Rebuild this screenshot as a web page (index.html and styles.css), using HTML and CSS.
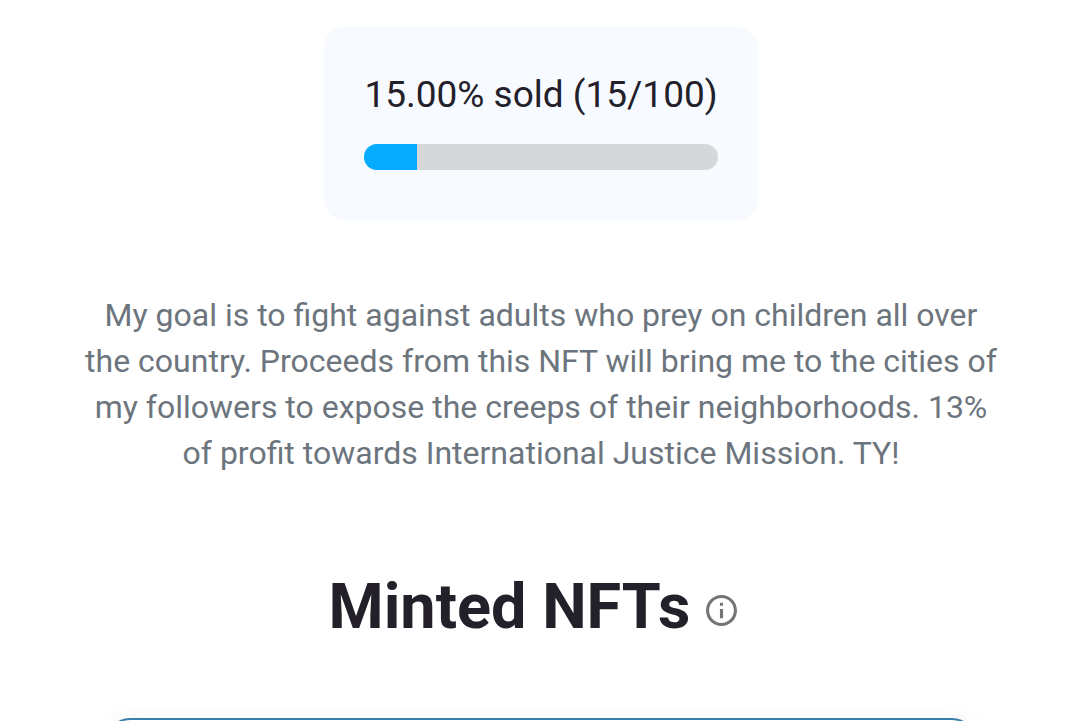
FILE: index.html
```html
<!DOCTYPE html>
<html lang="en">
<head>
    <meta charset="UTF-8">
    <meta name="viewport" content="width=device-width, initial-scale=1.0">
    <title>Minted NFTs</title>
    <link rel="stylesheet" href="styles.css">
</head>
<body>
    <main class="container">
        <section class="sold">
            <p class="sold-text" id="sold-label">15.00% sold (15/100)</p>
            <div class="bar" role="progressbar" aria-labelledby="sold-label" aria-valuenow="15" aria-valuemin="0" aria-valuemax="100">
                <div class="bar-fill" style="width: 15%"></div>
            </div>
        </section>

        <p class="description">My goal is to fight against adults who prey on children all over the country. Proceeds from this NFT will bring me to the cities of my followers to expose the creeps of their neighborhoods. 13% of profit towards International Justice Mission. TY!</p>

        <div class="heading">
            <h1>Minted NFTs</h1>
            <button class="info" type="button" aria-label="About minted NFTs">
                <svg viewBox="2 2 20 20">
                    <path d="M11 7h2v2h-2zm0 4h2v6h-2zm1-9C6.48 2 2 6.48 2 12s4.48 10 10 10 10-4.48 10-10S17.52 2 12 2zm0 18c-4.41 0-8-3.59-8-8s3.59-8 8-8 8 3.59 8 8-3.59 8-8 8z" fill="currentColor"/>
                </svg>
            </button>
        </div>

        <div class="nft-card"></div>
    </main>
</body>
</html>
```
FILE: styles.css
```css
* {
    box-sizing: border-box;
}
body {
    font-family: Roboto, sans-serif;
    margin: 0;
    background: #fff;
    color: #23202a;
}
.container {
    display: flex;
    flex-direction: column;
    align-items: center;
    padding: 27px 80px 0 82px;
}
.sold {
    padding: 42px 40px 50px;
    border-radius: 20px;
    background: #f7fbff;
}
.sold-text {
    margin: 0 0 24px;
    font-size: 37px;
    line-height: 51px;
}
.bar {
    height: 26px;
    border-radius: 13px;
    background: #d6d7d8;
    overflow: hidden;
}
.bar-fill {
    height: 100%;
    background: #05abff;
}
.description {
    margin: 72px 0 0;
    font-size: 32px;
    line-height: 46px;
    text-align: center;
    color: #6c757d;
}
.heading {
    display: flex;
    align-items: center;
    margin-top: 93px;
}
h1 {
    margin: 0;
    font-size: 63px;
    line-height: 76px;
}
.info {
    display: flex;
    margin: 0;
    padding: 20px 16px 14px;
    border: none;
    background: none;
    color: #757575;
    cursor: pointer;
}
.info svg {
    width: 31px;
    height: 31px;
}
.nft-card {
    width: 100%;
    max-width: 870px;
    height: 400px;
    margin-top: 73px;
    border: 2px solid #3a7fa8;
    border-radius: 24px;
    box-shadow: 0 0 24px rgba(0, 0, 0, 0.05);
}
```
